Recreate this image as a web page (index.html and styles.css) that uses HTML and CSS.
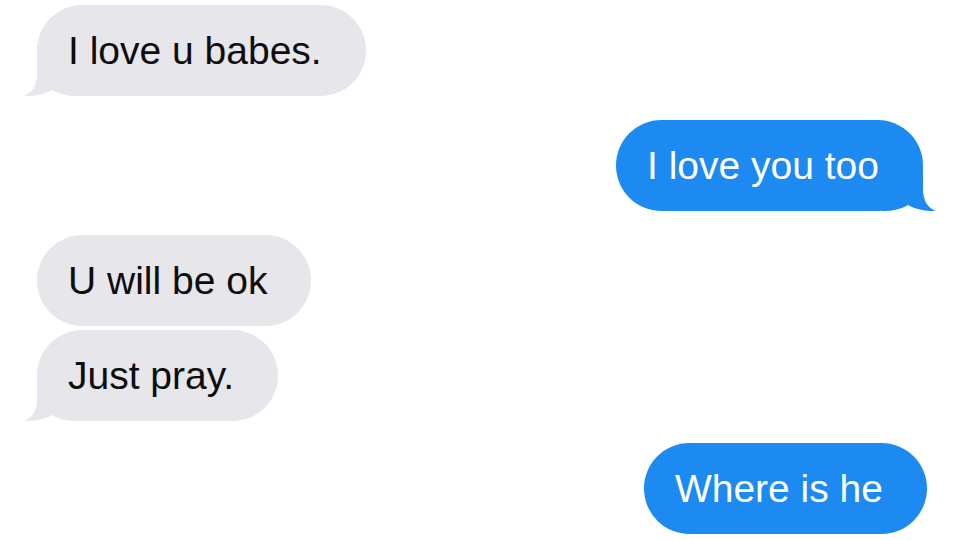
FILE: index.html
```html
<!DOCTYPE html>
<html lang="en">
<head>
<meta charset="utf-8">
<title>Messages</title>
<link rel="stylesheet" href="styles.css">
</head>
<body>
<main class="thread">
  <div class="bubble them tail first">I love u babes.</div>
  <div class="bubble me tail gap">I love you too</div>
  <div class="bubble them gap">U will be ok</div>
  <div class="bubble them tail tight">Just pray.</div>
  <div class="bubble me last gap-sm">Where is he</div>
</main>
</body>
</html>
```

FILE: styles.css
```css
html, body {
  margin: 0;
  padding: 0;
  background: #ffffff;
}

body {
  width: 960px;
  height: 540px;
  overflow: hidden;
  font-family: "Liberation Sans", Arial, sans-serif;
}

.thread {
  display: flex;
  flex-direction: column;
  padding: 5px 0 0 0;
}

.bubble {
  position: relative;
  z-index: 0;
  height: 91px;
  line-height: 91px;
  font-size: 39px;
  padding: 0 44px 0 31px;
  border-radius: 46px;
  white-space: nowrap;
  box-sizing: border-box;
}

.them {
  align-self: flex-start;
  margin-left: 37px;
  background: #e6e6eb;
  color: #0d0d0d;
}

.me {
  align-self: flex-end;
  margin-right: 37px;
  background: #1c8af0;
  color: #ffffff;
}

.me.last {
  margin-right: 33px;
}

.gap { margin-top: 24px; }
.tight { margin-top: 4px; }
.gap-sm { margin-top: 22px; }

.tail::before {
  content: "";
  position: absolute;
  z-index: -1;
  bottom: 0;
  width: 54px;
  height: 42px;
  clip-path: path('M13 0 L13 20 C13 32 8 39 0 42 C9 42.5 20 40.5 28 36 C35 40 43 42 54 42 L54 0 Z');
}

.them.tail::before {
  left: -13px;
  background: #e6e6eb;
}

.me.tail::before {
  right: -13px;
  background: #1c8af0;
  transform: scaleX(-1);
}
```
